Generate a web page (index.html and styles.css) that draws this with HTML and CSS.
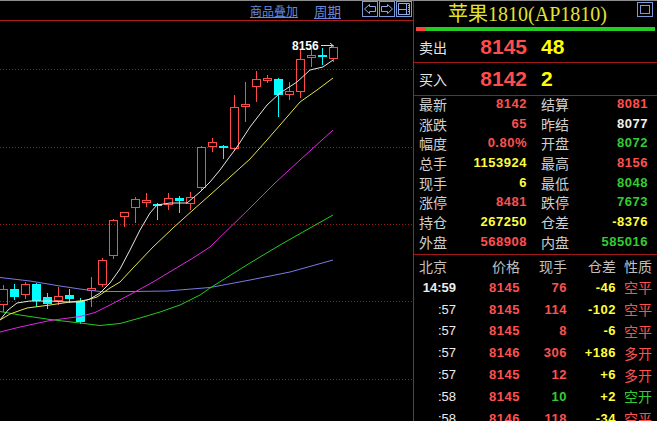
FILE: index.html
```html
<!DOCTYPE html>
<html lang="zh">
<head>
<meta charset="utf-8">
<title>苹果1810</title>
<link rel="stylesheet" href="styles.css">
</head>
<body>
<div class="screen">
  <div class="chart-panel">
    <div class="chart-toolbar">
      <a class="tool-link">商品叠加</a>
      <a class="tool-link tool-link-period">周期</a>
      <div class="tool-buttons">
        <svg class="tool-btn" width="16" height="16" viewBox="0 0 16 16"><rect class="btn-frame" x="0.5" y="0.5" width="15" height="15"/><polygon class="btn-glyph" points="2.5,8 7.5,3.5 7.5,5.5 13.5,5.5 13.5,10.5 7.5,10.5 7.5,12.5"/></svg>
        <svg class="tool-btn" width="16" height="16" viewBox="0 0 16 16"><rect class="btn-frame" x="0.5" y="0.5" width="15" height="15"/><polygon class="btn-glyph" points="13.5,8 8.5,3.5 8.5,5.5 2.5,5.5 2.5,10.5 8.5,10.5 8.5,12.5"/></svg>
        <svg class="tool-btn" width="16" height="16" viewBox="0 0 16 16"><rect class="btn-frame" x="0.5" y="0.5" width="15" height="15"/><path class="btn-glyph" d="M2.5 2.5H13.5V13.5H2.5Z M2.5 8.5H10.5 M10.5 2.5V13.5 M12 4.5H13 M12 6.5H13 M12 8.5H13 M12 10.5H13"/></svg>
      </div>
    </div>
    <svg class="chart" width="413" height="400" viewBox="0 21 413 400">
      <g class="grid">
        <line x1="0" y1="69.5" x2="413" y2="69.5"/>
        <line x1="0" y1="147.5" x2="413" y2="147.5"/>
        <line x1="0" y1="224.5" x2="413" y2="224.5"/>
        <line x1="0" y1="301.5" x2="413" y2="301.5"/>
        <line x1="0" y1="379.5" x2="413" y2="379.5"/>
      </g>
      <g class="up">
        <path d="M3.5 285V289M3.5 305V312"/><rect x="-0.5" y="289.5" width="8" height="15"/>
        <path d="M25.5 282V284M25.5 295V299"/><rect x="21.5" y="284.5" width="8" height="10"/>
        <path d="M58.5 287V296M58.5 301V305"/><rect x="54.5" y="296.5" width="8" height="4"/>
        <path d="M91.5 277V288M91.5 291V307"/><rect x="87.5" y="288.5" width="8" height="2"/>
        <path d="M102.5 258V260M102.5 285V287"/><rect x="98.5" y="260.5" width="8" height="24"/>
        <path d="M113.5 219V220M113.5 256V259"/><rect x="109.5" y="220.5" width="8" height="35"/>
        <path d="M124.5 217V227"/><rect x="120.5" y="212.5" width="8" height="4"/>
        <path d="M135.5 197V199M135.5 208V223"/><rect x="131.5" y="199.5" width="8" height="8"/>
        <path d="M146.5 193V200M146.5 203V207"/><rect x="142.5" y="200.5" width="8" height="2"/>
        <path d="M168.5 193V198M168.5 205V210"/><rect x="164.5" y="198.5" width="8" height="6"/>
        <path d="M190.5 192V197M190.5 204V210"/><rect x="186.5" y="197.5" width="8" height="6"/>
        <path d="M201.5 146V147M201.5 188V190"/><rect x="197.5" y="147.5" width="8" height="40"/>
        <path d="M212.5 138V142M212.5 147V152"/><rect x="208.5" y="142.5" width="8" height="4"/>
        <path d="M234.5 95V107M234.5 149V151"/><rect x="230.5" y="107.5" width="8" height="41"/>
        <path d="M245.5 82V104M245.5 107V122"/><rect x="241.5" y="104.5" width="8" height="2"/>
        <path d="M256.5 71V79M256.5 87V102"/><rect x="252.5" y="79.5" width="8" height="7"/>
        <path d="M267.5 75V78M267.5 81V83"/><rect x="263.5" y="78.5" width="8" height="2"/>
        <path d="M289.5 82V91M289.5 95V100"/><rect x="285.5" y="91.5" width="8" height="3"/>
        <path d="M300.5 50V59M300.5 92V98"/><rect x="296.5" y="59.5" width="8" height="32"/>
        <path d="M311.5 48V55M311.5 58V67"/><rect x="307.5" y="55.5" width="8" height="2"/>
        <path d="M333.5 45V47M333.5 59V62"/><rect x="329.5" y="47.5" width="8" height="11"/>
      </g>
      <g class="down">
        <path d="M14.5 284V300"/><rect x="10" y="289" width="9" height="8"/>
        <path d="M36.5 283V307"/><rect x="32" y="284" width="9" height="17"/>
        <path d="M47.5 293V309"/><rect x="43" y="297" width="9" height="7"/>
        <path d="M69.5 289V303"/><rect x="65" y="295" width="9" height="4"/>
        <path d="M80.5 298V324"/><rect x="76" y="301" width="9" height="21"/>
        <path d="M157.5 203V220"/><rect x="153" y="204" width="9" height="2"/>
        <path d="M179.5 196V213"/><rect x="175" y="198" width="9" height="3"/>
        <path d="M223.5 145V159"/><rect x="219" y="146" width="9" height="2"/>
        <path d="M278.5 78V117"/><rect x="274" y="79" width="9" height="16"/>
        <path d="M322.5 48V65"/><rect x="318" y="55" width="9" height="2"/>
      </g>
      <path class="ma ma60" d="M0 277.5L30 281L60 286L80 289L100 291.5L133 291.5L167 291L210 287.5L250 280L290 272L333 260"/>
      <path class="ma ma40" d="M0 311.5L20 315L50 319.5L80 323L100 325.5L120 323.5L140 318L160 312L180 305L200 295L210 288L250 263L280 245L310 228L333 215"/>
      <path class="ma ma20" d="M0 332L20 327L50 320.5L80 316.5L95 312.5L110 305L133 293L153 282L173 270L193 258L210 247L250 208L275 183L300 160L333 130"/>
      <path class="ma ma10" d="M0 320L10 314L27 308L50 305L70 302L87 300L97 297L110 288L120 282L133 268L153 247L173 228L193 210L210 195L230 177L250 159L267 140L287 117L300 102L317 90L333 78"/>
      <path class="ma ma5" d="M0 320L8 310L17 303L30 301L50 301L67 302L80 302L90 299L100 293L110 283L120 269L130 250L140 230L150 213L157 205L170 203L187 203L200 192L210 182L220 170L228 159L237 147L250 127L267 105L280 93L297 82L310 70L323 67L333 60"/>
      <text class="peak-label" x="292" y="50">8156</text>
      <path class="peak-arrow" d="M321 45.5H333M330 43L333 45.5L330 48"/>
    </svg>
  </div>

  <div class="quote-panel">
    <div class="quote-title">
      <span class="quote-name">苹果1810(AP1810)</span>
      <svg class="title-icon" width="16" height="15" viewBox="0 0 16 15"><rect x="0.5" y="0.5" width="15" height="14"/><rect x="3.5" y="3.5" width="9" height="8"/></svg>
    </div>
    <div class="ratio-bar"><div class="ratio-sell"></div><div class="ratio-buy"></div></div>

    <div class="book-row">
      <span class="book-label">卖出</span>
      <span class="book-price">8145</span>
      <span class="book-vol">48</span>
    </div>
    <div class="book-row book-row-bid">
      <span class="book-label">买入</span>
      <span class="book-price">8142</span>
      <span class="book-vol">2</span>
    </div>

    <div class="stats">
      <div class="stat-row"><span class="stat-label">最新</span><span class="stat-val red">8142</span><span class="stat-label2">结算</span><span class="stat-val red">8081</span></div>
      <div class="stat-row"><span class="stat-label">涨跌</span><span class="stat-val red">65</span><span class="stat-label2">昨结</span><span class="stat-val white">8077</span></div>
      <div class="stat-row"><span class="stat-label">幅度</span><span class="stat-val red">0.80%</span><span class="stat-label2">开盘</span><span class="stat-val green">8072</span></div>
      <div class="stat-row"><span class="stat-label">总手</span><span class="stat-val yellow">1153924</span><span class="stat-label2">最高</span><span class="stat-val red">8156</span></div>
      <div class="stat-row"><span class="stat-label">现手</span><span class="stat-val yellow">6</span><span class="stat-label2">最低</span><span class="stat-val green">8048</span></div>
      <div class="stat-row"><span class="stat-label">涨停</span><span class="stat-val red">8481</span><span class="stat-label2">跌停</span><span class="stat-val green">7673</span></div>
      <div class="stat-row"><span class="stat-label">持仓</span><span class="stat-val yellow">267250</span><span class="stat-label2">仓差</span><span class="stat-val yellow">-8376</span></div>
      <div class="stat-row"><span class="stat-label">外盘</span><span class="stat-val red">568908</span><span class="stat-label2">内盘</span><span class="stat-val green">585016</span></div>
    </div>

    <div class="ticks">
      <div class="tick-head"><span class="th-time">北京</span><span class="th-num">价格</span><span class="th-num">现手</span><span class="th-num">仓差</span><span class="th-kind">性质</span></div>
      <div class="tick-row"><span class="t-time t-time-full">14:59</span><span class="t-price">8145</span><span class="t-vol red">76</span><span class="t-oi">-46</span><span class="t-kind red">空平</span></div>
      <div class="tick-row"><span class="t-time">:57</span><span class="t-price">8145</span><span class="t-vol red">114</span><span class="t-oi">-102</span><span class="t-kind red">空平</span></div>
      <div class="tick-row"><span class="t-time">:57</span><span class="t-price">8145</span><span class="t-vol red">8</span><span class="t-oi">-6</span><span class="t-kind red">空平</span></div>
      <div class="tick-row"><span class="t-time">:57</span><span class="t-price">8146</span><span class="t-vol red">306</span><span class="t-oi">+186</span><span class="t-kind red">多开</span></div>
      <div class="tick-row"><span class="t-time">:57</span><span class="t-price">8145</span><span class="t-vol red">12</span><span class="t-oi">+6</span><span class="t-kind red">多开</span></div>
      <div class="tick-row"><span class="t-time">:58</span><span class="t-price">8145</span><span class="t-vol green">10</span><span class="t-oi">+2</span><span class="t-kind green">空开</span></div>
      <div class="tick-row"><span class="t-time">:58</span><span class="t-price">8146</span><span class="t-vol red">118</span><span class="t-oi">-34</span><span class="t-kind red">空平</span></div>
    </div>
  </div>
</div>
</body>
</html>
```
FILE: styles.css
```css
html, body {
  margin: 0;
  padding: 0;
  background: #000;
}
body {
  width: 657px;
  height: 421px;
  overflow: hidden;
  font-family: "Liberation Sans", "Noto Sans CJK SC", sans-serif;
}
.screen {
  display: flex;
  width: 657px;
  height: 421px;
  overflow: hidden;
  border-top: 1px solid #8c8c8c;
  box-sizing: border-box;
}

/* ---------- chart ---------- */
.chart-panel {
  width: 413px;
  flex: none;
  border-right: 1px solid #b01c1c;
  display: flex;
  flex-direction: column;
}
.chart-panel > * {
  flex: none;
}
.chart-toolbar {
  height: 19px;
  border-bottom: 1px solid #b01c1c;
  display: flex;
  align-items: center;
  justify-content: flex-end;
  padding-right: 1px;
}
.tool-link {
  font-family: "Noto Sans CJK SC", sans-serif;
  font-size: 12px;
  line-height: 16px;
  color: #6a88d8;
  text-decoration: underline;
  margin-right: 16px;
}
.tool-link-period {
  font-size: 13.5px;
  margin-right: 21px;
}
.tool-buttons {
  display: flex;
  gap: 1px;
  align-self: flex-start;
}
.tool-btn {
  display: block;
}
.btn-frame {
  fill: #000;
  stroke: #7c9ad8;
}
.btn-glyph {
  fill: none;
  stroke: #8eaae6;
}
.chart {
  display: block;
}
.grid line {
  stroke: #9a1a1a;
  stroke-dasharray: 1 2;
}
.up rect, .up path {
  fill: none;
  stroke: #ff4a4a;
}
.down rect {
  fill: #00ffff;
}
.down path {
  stroke: #00ffff;
}
.ma {
  fill: none;
  stroke-width: 1;
}
.ma5 { stroke: #e6e6e6; }
.ma10 { stroke: #e4e44a; }
.ma20 { stroke: #e028e0; }
.ma40 { stroke: #22cc22; }
.ma60 { stroke: #7a7ae6; }
.peak-label {
  fill: #ffffff;
  font-family: "Liberation Sans", sans-serif;
  font-weight: bold;
  font-size: 12px;
}
.peak-arrow {
  fill: none;
  stroke: #d8d8d8;
}

/* ---------- quote panel ---------- */
.quote-panel {
  width: 243px;
  flex: none;
  display: flex;
  flex-direction: column;
  color: #c8c8c8;
}
.quote-panel > * {
  flex: none;
}
.quote-title {
  height: 26px;
  display: flex;
  align-items: center;
  padding-left: 4px;
}
.quote-name {
  flex: 1;
  text-align: center;
  font-family: "Liberation Serif", "Noto Sans CJK SC", serif;
  font-size: 20px;
  line-height: 24px;
  color: #e2e232;
}
.title-icon {
  align-self: flex-start;
  margin-top: 1px;
  margin-right: 4px;
}
.title-icon rect {
  fill: none;
  stroke: #7c9ad8;
}
.ratio-bar {
  height: 4px;
  display: flex;
  margin: 0 2px;
}
.ratio-sell {
  width: 10px;
  background: #ff4040;
}
.ratio-buy {
  flex: 1;
  background: #22cc22;
}

.book-row {
  height: 31px;
  border-bottom: 1px solid #a01818;
  display: grid;
  grid-template-columns: 40px 68px 1fr;
  align-items: center;
  padding-left: 5px;
}
.book-row-bid {
  height: 32px;
}
.book-label {
  font-family: "Noto Sans CJK SC", sans-serif;
  font-size: 14px;
  color: #e6e6e6;
}
.book-price {
  text-align: right;
  font-weight: bold;
  font-size: 21px;
  color: #ff4c4c;
}
.book-vol {
  padding-left: 14px;
  font-weight: bold;
  font-size: 21px;
  color: #ffff00;
}

.stats {
  border-bottom: 1px solid #a01818;
  padding-left: 5px;
}
.stat-row {
  height: 19.7px;
  display: grid;
  grid-template-columns: 40px 68px 54px 67px;
  align-items: start;
  line-height: 16px;
}
.stat-label, .stat-label2 {
  font-family: "Noto Sans CJK SC", sans-serif;
  font-size: 14px;
  color: #d0d0d0;
}
.stat-label2 {
  padding-left: 14px;
}
.stat-val {
  text-align: right;
  font-weight: bold;
  font-size: 13px;
  letter-spacing: 0.5px;
}
.red { color: #ff5050; }
.green { color: #33cc33; }
.yellow { color: #ffff3c; }
.white { color: #f0f0f0; }

.ticks {
  padding-left: 5px;
}
.tick-head, .tick-row {
  display: grid;
  grid-template-columns: 37px 64px 47px 49px 1fr;
  align-items: center;
}
.tick-head {
  height: 22px;
  font-family: "Noto Sans CJK SC", sans-serif;
  font-size: 14px;
  color: #c0c0c0;
}
.th-num {
  text-align: right;
}
.th-kind {
  padding-left: 8px;
}
.tick-row {
  height: 21.8px;
  font-size: 13px;
}
.t-time {
  text-align: right;
  color: #ececec;
}
.t-time-full {
  font-weight: bold;
}
.t-price, .t-vol, .t-oi {
  text-align: right;
  font-weight: bold;
  letter-spacing: 0.5px;
}
.t-price { color: #ff5050; }
.t-oi { color: #ffff3c; }
.t-kind {
  padding-left: 8px;
  font-family: "Noto Sans CJK SC", sans-serif;
  font-size: 14px;
}
```
